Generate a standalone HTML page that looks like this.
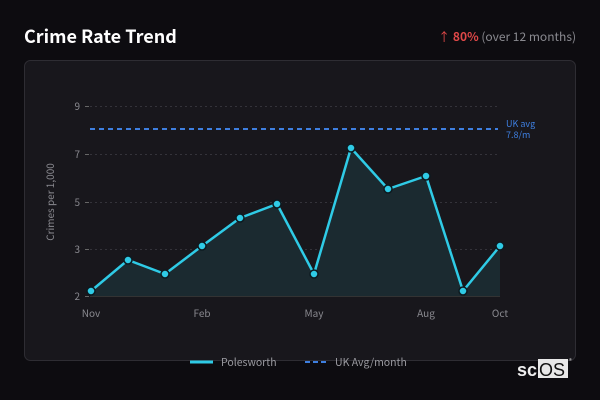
<!DOCTYPE html>
<html><head><meta charset="utf-8"><style>
body{margin:0;width:600px;height:400px;background:#0d0c10;font-family:"Noto Sans CJK JP",sans-serif;overflow:hidden;position:relative}
</style></head><body>
<svg width="600" height="400" style="position:absolute;left:0;top:0" font-family="Noto Sans CJK JP, Liberation Sans, sans-serif">
<text x="24" y="43" fill="#fff" font-size="18" font-weight="bold">Crime Rate Trend</text>
<text x="576" y="41" text-anchor="end" font-size="12"><tspan fill="#e04848">↑</tspan><tspan fill="#e04848" font-weight="bold"> 80%</tspan><tspan fill="#8a8a90"> (over 12 months)</tspan></text>
<rect x="24.5" y="60.5" width="551" height="300" rx="6" fill="#18171c" stroke="#2e2d33"/>
<g stroke="#34333a" stroke-dasharray="2,3" stroke-width="1">
<line x1="90" y1="106.5" x2="500" y2="106.5"/><line x1="90" y1="154.5" x2="500" y2="154.5"/><line x1="90" y1="202.5" x2="500" y2="202.5"/><line x1="90" y1="249.5" x2="500" y2="249.5"/>
</g>
<line x1="90" y1="296.5" x2="500" y2="296.5" stroke="#333"/>
<g fill="#8a8a90" font-size="10" text-anchor="end">
<text x="80" y="110">9</text><text x="80" y="158">7</text><text x="80" y="206">5</text><text x="80" y="253">3</text><text x="80" y="300">2</text>
</g>
<g stroke="#666" stroke-width="1"><line x1="85" y1="106.5" x2="89" y2="106.5"/><line x1="85" y1="154.5" x2="89" y2="154.5"/><line x1="85" y1="202.5" x2="89" y2="202.5"/><line x1="85" y1="249.5" x2="89" y2="249.5"/><line x1="85" y1="296.5" x2="89" y2="296.5"/></g>
<text transform="translate(54,202) rotate(-90)" text-anchor="middle" fill="#8a8a90" font-size="10">Crimes per 1,000</text>
<polygon fill="#1b2a30" points="91,296 91,291 128,260 165,274 202,246 240,218 277,204 314,274 351,148 388,189 426,176 463,291 500,246 500,296"/>
<line x1="90" y1="129" x2="498" y2="129" stroke="#3e7fe0" stroke-width="2" stroke-dasharray="5,4"/>
<text x="506" y="127" fill="#3e7fe0" font-size="9">UK avg</text><text x="506" y="138" fill="#3e7fe0" font-size="9">7.8/m</text>
<polyline fill="none" stroke="#2fcbe6" stroke-width="2.5" stroke-linejoin="round" points="91,291 128,260 165,274 202,246 240,218 277,204 314,274 351,148 388,189 426,176 463,291 500,246"/>
<g fill="#2fcbe6" stroke="#0d1a20" stroke-width="1.5">
<circle cx="91" cy="291" r="4"/><circle cx="128" cy="260" r="4"/><circle cx="165" cy="274" r="4"/><circle cx="202" cy="246" r="4"/><circle cx="240" cy="218" r="4"/><circle cx="277" cy="204" r="4"/><circle cx="314" cy="274" r="4"/><circle cx="351" cy="148" r="4"/><circle cx="388" cy="189" r="4"/><circle cx="426" cy="176" r="4"/><circle cx="463" cy="291" r="4"/><circle cx="500" cy="246" r="4"/>
</g>
<g fill="#8a8a90" font-size="10" text-anchor="middle">
<text x="91" y="317">Nov</text><text x="202" y="317">Feb</text><text x="314" y="317">May</text><text x="426" y="317">Aug</text><text x="500" y="317">Oct</text>
</g>
<line x1="190" y1="362" x2="213" y2="362" stroke="#2fcbe6" stroke-width="3"/>
<text x="221" y="366" fill="#9a9aa0" font-size="10.5">Polesworth</text>
<line x1="305" y1="362" x2="328" y2="362" stroke="#3e7fe0" stroke-width="2" stroke-dasharray="5,3"/>
<text x="335" y="366" fill="#9a9aa0" font-size="10.5">UK Avg/month</text>
<rect x="538" y="359" width="30" height="19" fill="#e8e8e8"/>
<text x="517" y="376" fill="#eee" font-size="18" font-weight="bold" font-family="Liberation Sans, sans-serif">sc</text>
<text x="539" y="376" fill="#111" font-size="18" font-family="Liberation Sans, sans-serif">OS</text>
<text x="569" y="363" fill="#ccc" font-size="6">®</text>
</svg>
</body></html>
